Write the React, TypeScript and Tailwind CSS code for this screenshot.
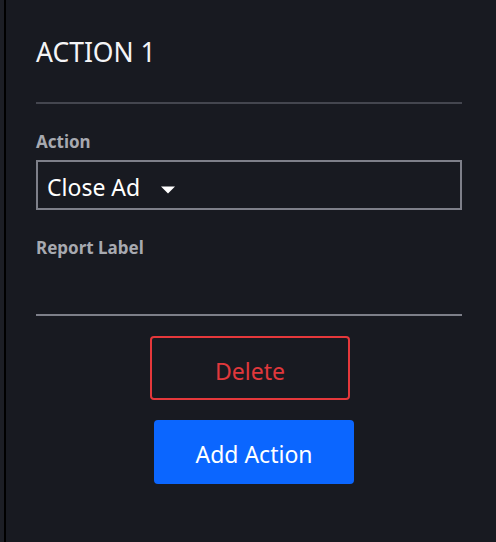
import React from 'react';

const ActionPanel: React.FC = () => {
  return (
    <div className="flex min-h-[542px] w-[496px] bg-[#181a21] font-['Noto_Sans',sans-serif]">
      <div className="w-[4px] bg-[#1c1e25]" />
      <div className="w-[2px] bg-black" />
      <div className="flex flex-1 flex-col pl-[30px] pr-[34px]">
        <h2 className="mt-[36px] text-[26.5px] leading-[33px] font-normal text-[#f4f4f6]">ACTION 1</h2>
        <div className="mt-[33px] h-[2px] bg-[#44464f]" />

        <label className="mt-[26px] text-[17px] leading-[24px] font-bold text-[#a7a9b0]">Action</label>
        <div className="mt-[6px] flex h-[50px] items-start border-2 border-[#7e808a] pl-[9px]">
          <span className="mt-[10px] text-[23px] leading-[30px] text-white">Close Ad</span>
          <svg className="ml-[20px] mt-[24px]" width="16" height="8" viewBox="0 0 16 8">
            <path d="M1 0.5 H15 L8 7.5 Z" fill="#ffffff" />
          </svg>
        </div>

        <label className="mt-[26px] text-[17px] leading-[24px] font-bold text-[#a7a9b0]">Report Label</label>
        <div className="h-[56px] border-b-2 border-[#7d7f89]" />

        <button className="ml-[114px] mt-[20px] h-[64px] w-[200px] rounded-[4px] border-2 border-[#e5383b] pt-[6px] text-[23px] leading-[30px] text-[#e0383c]">
          Delete
        </button>
        <button className="ml-[118px] mt-[20px] h-[64px] w-[200px] rounded-[4px] bg-[#0b66ff] pt-[3px] text-[23px] leading-[30px] text-white">
          Add Action
        </button>
      </div>
    </div>
  );
};

export default function App() {
  return <ActionPanel />;
}
